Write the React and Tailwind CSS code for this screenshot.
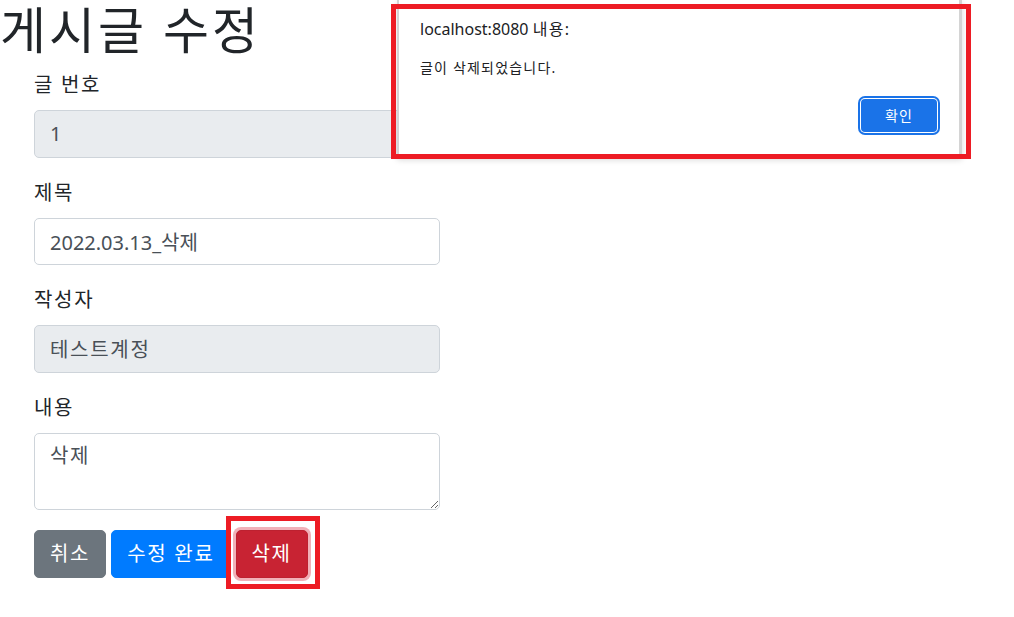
import { useState } from "react";

const font = { fontFamily: '"Noto Sans", "Noto Sans CJK KR", sans-serif' };

function Field({ label, children }) {
  return (
    <div className="mb-[20px]">
      <label className="block mb-[10px] text-[20px] leading-[30px] tracking-[0.085em] text-[#212529]">{label}</label>
      {children}
    </div>
  );
}

const inputCls =
  "block w-full h-[47.5px] px-[15px] py-[7.5px] text-[20px] leading-[30px] text-[#495057] border border-[#ced4da] rounded-[5px] outline-none";

const btnCls = "h-[48px] px-[15px] text-[20px] leading-[30px] tracking-[0.085em] text-white border rounded-[5px]";

export default function App() {
  const [title, setTitle] = useState("2022.03.13_삭제");
  const [content, setContent] = useState("삭제");

  return (
    <div className="relative min-h-screen bg-white overflow-hidden" style={font}>
      <h1 className="text-[50px] leading-[60px] font-normal tracking-[0.06em] text-[#212529] mb-[10px]">게시글 수정</h1>

      <form className="ml-[34px] w-[406px]" onSubmit={(e) => e.preventDefault()}>
        <Field label="글 번호">
          <input readOnly value="1" className={inputCls + " bg-[#e9ecef]"} />
        </Field>
        <Field label="제목">
          <input value={title} onChange={(e) => setTitle(e.target.value)} className={inputCls + " bg-white"} />
        </Field>
        <Field label="작성자">
          <input readOnly value="테스트계정" className={inputCls + " bg-[#e9ecef] tracking-[0.085em]"} />
        </Field>
        <Field label="내용">
          <textarea
            rows={2}
            value={content}
            onChange={(e) => setContent(e.target.value)}
            className="block w-full h-[77px] px-[15px] py-[7.5px] text-[20px] leading-[30px] tracking-[0.085em] text-[#495057] border border-[#ced4da] rounded-[5px] outline-none bg-white"
          />
        </Field>

        <div className="flex gap-[5px]">
          <button type="button" className={btnCls + " bg-[#6c757d] border-[#6c757d]"}>
            취소
          </button>
          <button type="submit" className={btnCls + " bg-[#007bff] border-[#007bff]"}>
            수정 완료
          </button>
          <div className="relative">
            <button type="button" className={btnCls + " bg-[#c82333] border-[#bd2130] shadow-[0_0_0_3px_rgba(225,83,97,0.45)]"}>
              삭제
            </button>
            {/* annotation box */}
            <div className="absolute -left-[10px] -right-[12px] -top-[14px] -bottom-[11px] border-[5px] border-[#ed1c24] pointer-events-none" />
          </div>
        </div>
      </form>

      {/* alert dialog */}
      <div className="absolute left-[397px] top-0 w-[565px] h-[158px] bg-white border-l-2 border-r-[3px] border-[#d4d4d4] shadow-[0_2px_6px_rgba(0,0,0,0.15)] pt-[19px] pl-[21px] pr-[22px] flex flex-col">
        <div className="text-[16px] leading-[20px] text-[#202124]">
          localhost:8080 <span className="tracking-[0.085em]">내용:</span>
        </div>
        <div className="mt-[19px] text-[14px] leading-[20px] tracking-[0.085em] text-[#202124]">글이 삭제되었습니다.</div>
        <div className="mt-[21px] flex justify-end">
          <button
            type="button"
            className="w-[76px] h-[33px] rounded-[4px] bg-[#1a73e8] text-white text-[14px] leading-[20px] tracking-[0.085em] shadow-[0_0_0_1px_#ffffff,0_0_0_3px_#1a73e8]"
          >
            확인
          </button>
        </div>
      </div>
      <div className="absolute left-[391px] top-[4px] w-[580px] h-[155px] border-[5px] border-[#ed1c24] pointer-events-none" />
    </div>
  );
}
